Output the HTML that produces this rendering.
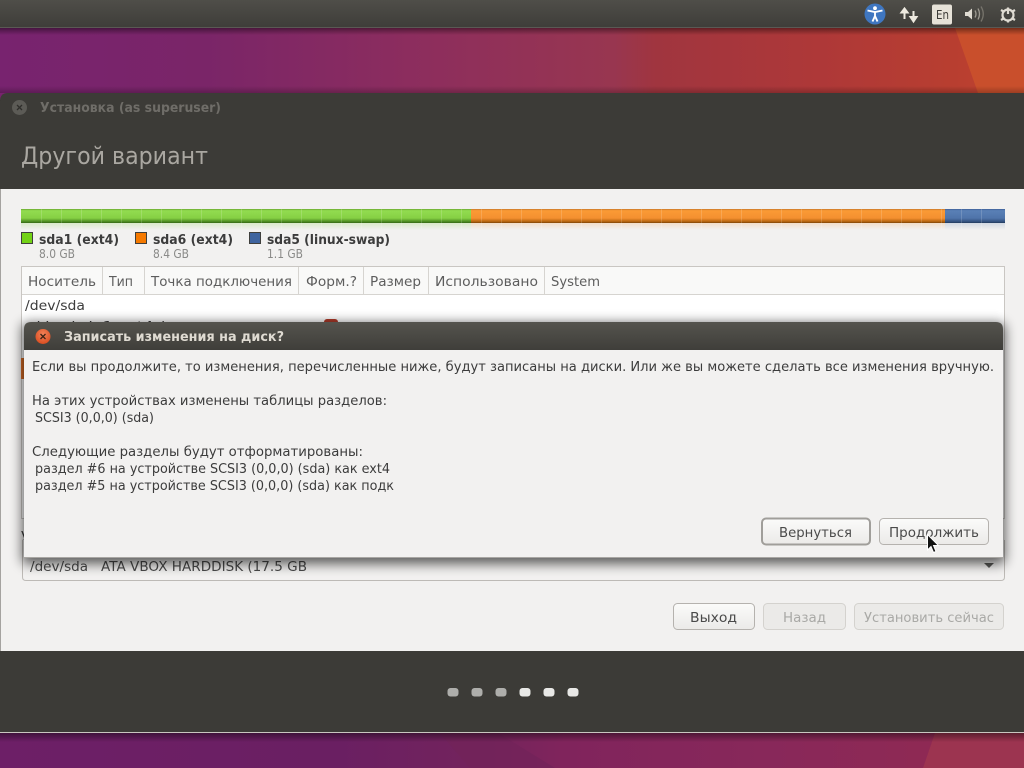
<!DOCTYPE html>
<html lang="ru"><head><meta charset="utf-8"><title>Установка</title>
<style>
html,body{margin:0;padding:0;width:1024px;height:768px;overflow:hidden;background:#000}
svg{display:block}
text{font-family:"DejaVu Sans","Liberation Sans",sans-serif;font-size:13.5px;fill:#3c3c3c}
.h{fill:#5d5d5d;font-size:13.5px}
.b{font-weight:bold;font-size:13px;fill:#3c3c3c}
.s{fill:#8a8a88;font-size:12px}
.d{fill:#a9a9a6}
</style></head><body>
<svg xmlns="http://www.w3.org/2000/svg" width="1024" height="768" viewBox="0 0 1024 768">
<defs>
<linearGradient id="wt" x1="0" y1="0" x2="1" y2="0">
<stop offset="0" stop-color="#78236f"/><stop offset=".2" stop-color="#7a2568"/><stop offset=".4" stop-color="#8c2d5e"/><stop offset=".6" stop-color="#983650"/><stop offset=".64" stop-color="#a0353f"/><stop offset=".8" stop-color="#ae3838"/><stop offset=".93" stop-color="#b83e30"/><stop offset="1" stop-color="#c04430"/></linearGradient>
<linearGradient id="wb" x1="0" y1="0" x2="1" y2="0">
<stop offset="0" stop-color="#6d1f67"/><stop offset=".33" stop-color="#6a1f62"/><stop offset=".48" stop-color="#74245c"/><stop offset=".55" stop-color="#80245c"/><stop offset=".75" stop-color="#88285a"/><stop offset="1" stop-color="#922a50"/></linearGradient>
<linearGradient id="ds" x1="0" y1="0" x2="0" y2="1"><stop offset="0" stop-color="#000" stop-opacity=".42"/><stop offset="1" stop-color="#000" stop-opacity="0"/></linearGradient>
<linearGradient id="du" x1="0" y1="1" x2="0" y2="0"><stop offset="0" stop-color="#000" stop-opacity=".22"/><stop offset="1" stop-color="#000" stop-opacity="0"/></linearGradient>
<linearGradient id="bar" x1="0" y1="0" x2="0" y2="1"><stop offset="0" stop-color="#4f4e49"/><stop offset="1" stop-color="#3e3d39"/></linearGradient>
<linearGradient id="gr" x1="0" y1="0" x2="0" y2="1"><stop offset="0" stop-color="#6aa82f"/><stop offset=".12" stop-color="#92dc50"/><stop offset=".65" stop-color="#86d044"/><stop offset=".9" stop-color="#4c8a20"/><stop offset="1" stop-color="#356815"/></linearGradient>
<linearGradient id="or" x1="0" y1="0" x2="0" y2="1"><stop offset="0" stop-color="#c8782a"/><stop offset=".12" stop-color="#fb9a35"/><stop offset=".65" stop-color="#f49030"/><stop offset=".9" stop-color="#b5640f"/><stop offset="1" stop-color="#7d4306"/></linearGradient>
<linearGradient id="bl" x1="0" y1="0" x2="0" y2="1"><stop offset="0" stop-color="#3d5f98"/><stop offset=".12" stop-color="#5a80b6"/><stop offset=".65" stop-color="#4f74aa"/><stop offset=".9" stop-color="#34527f"/><stop offset="1" stop-color="#22395c"/></linearGradient>
<linearGradient id="fade" x1="0" y1="0" x2="0" y2="1"><stop offset="0" stop-color="#f2f1f0" stop-opacity=".55"/><stop offset="1" stop-color="#f2f1f0"/></linearGradient>
<linearGradient id="btn" x1="0" y1="0" x2="0" y2="1"><stop offset="0" stop-color="#fbfbfa"/><stop offset="1" stop-color="#ebeae8"/></linearGradient>
<linearGradient id="tt" x1="0" y1="0" x2="0" y2="1"><stop offset="0" stop-color="#55544e"/><stop offset="1" stop-color="#3f3e3a"/></linearGradient>
<radialGradient id="cl" cx=".5" cy=".35" r=".7"><stop offset="0" stop-color="#f4845a"/><stop offset="1" stop-color="#d8491c"/></radialGradient>
<filter id="sh" x="-5%" y="-15%" width="110%" height="130%"><feGaussianBlur stdDeviation="6"/></filter>
</defs>

<!-- wallpaper -->
<rect y="0" width="1024" height="100" fill="url(#wt)"/>
<polygon points="955,28 1024,28 1024,93 978,93" fill="#c94f2c"/>
<rect y="725" width="1024" height="43" fill="url(#wb)"/>
<polygon points="498,733 555,768 470,768 440,733" fill="#72245a" opacity=".7"/>
<polygon points="935,733 1024,733 1024,768 923,768" fill="#9c3450"/>
<rect y="28" width="1024" height="7" fill="url(#ds)"/>
<rect y="86" width="1024" height="7" fill="url(#du)"/>
<rect y="733" width="1024" height="9" fill="url(#ds)"/>

<!-- top panel -->
<rect width="1024" height="28" fill="url(#bar)"/>
<rect y="27" width="1024" height="1" fill="#5a5954"/>
<circle cx="875" cy="14" r="10.500" fill="#3f76c0"/>
<circle cx="875" cy="8.200" r="1.900" fill="#fff"/>
<path d="M867.500 10.500 L875 12 L882.500 10.500 M875 12 V16 M875 16 L872.500 21.500 M875 16 L877.500 21.500" stroke="#fff" stroke-width="1.900" fill="none"/>
<path d="M904.500 9 V19 M901.500 12.500 L904.500 8.500 L907.500 12.500Z M913.500 11 V20 M910.500 17 L913.500 21.500 L916.500 17Z" stroke="#eeeae0" stroke-width="2" fill="#eeeae0"/>
<rect x="932" y="4.500" width="20" height="20" rx="2" fill="#e6e2d8"/>
<text x="936" y="19" textLength="13" lengthAdjust="spacingAndGlyphs" style="font-size:12.500px;fill:#3c3b37">En</text>
<path d="M965 12 H968 L972 8.500 V19.500 L968 16 H965Z" fill="#dfdbd2"/>
<path d="M975 10.500 Q977 14 975 17.500 M978 8.500 Q981 14 978 19.500" stroke="#9d9a92" stroke-width="1.300" fill="none"/>
<path d="M981 6.500 Q985.500 14 981 21.500" stroke="#77746c" stroke-width="1.300" fill="none"/>
<circle cx="1008" cy="15" r="5.500" fill="none" stroke="#dfdbd2" stroke-width="2.200"/>
<path d="M1008 7.500 V14" stroke="#dfdbd2" stroke-width="2.200"/>
<path d="M1001 10 L1003.500 11.500 M1015 10 L1012.500 11.500 M1001 20 L1003.500 18.500 M1015 20 L1012.500 18.500 M1008 22.500 V20.500" stroke="#dfdbd2" stroke-width="2.200"/>

<!-- window -->
<path d="M0 101 Q0 93 8 93 H1024 V733 H0Z" fill="#3c3b37"/>
<rect x="0" y="732" width="1024" height="1" fill="#c9c6c0"/>
<rect x="0" y="189" width="1024" height="462" fill="#f2f1f0"/>
<rect x="0" y="189" width="1" height="462" fill="#a5a3a0"/>
<circle cx="19.500" cy="107.500" r="7.500" fill="#5c5b56"/>
<path d="M17 105 L22 110 M22 105 L17 110" stroke="#2f2e2b" stroke-width="1.300"/>
<text x="40" y="112" textLength="181" lengthAdjust="spacingAndGlyphs" style="font-weight:bold;font-size:13px;fill:#6f6d68">Установка (as superuser)</text>
<text x="21" y="164" textLength="187" lengthAdjust="spacingAndGlyphs" style="font-size:24px;fill:#aaa7a1">Другой вариант</text>

<!-- partition bar -->
<rect x="21" y="209" width="450" height="14" fill="url(#gr)"/>
<rect x="471" y="209" width="474" height="14" fill="url(#or)"/>
<rect x="945" y="209" width="60" height="14" fill="url(#bl)"/>
<g opacity=".55">
<rect x="21" y="223" width="450" height="7" fill="#8fd050"/>
<rect x="471" y="223" width="474" height="7" fill="#f0a050"/>
<rect x="945" y="223" width="60" height="7" fill="#7090b8"/>
</g>
<rect x="21" y="223" width="984" height="7" fill="url(#fade)"/>
<path d="M41.500 209V229M61.500 209V229M81.500 209V229M101.500 209V229M121.500 209V229M141.500 209V229M161.500 209V229M181.500 209V229M201.500 209V229M221.500 209V229M241.500 209V229M261.500 209V229M281.500 209V229M301.500 209V229M321.500 209V229M341.500 209V229M361.500 209V229M381.500 209V229M401.500 209V229M421.500 209V229M441.500 209V229M461.500 209V229M481.500 209V229M501.500 209V229M521.500 209V229M541.500 209V229M561.500 209V229M581.500 209V229M601.500 209V229M621.500 209V229M641.500 209V229M661.500 209V229M681.500 209V229M701.500 209V229M721.500 209V229M741.500 209V229M761.500 209V229M781.500 209V229M801.500 209V229M821.500 209V229M841.500 209V229M861.500 209V229M881.500 209V229M901.500 209V229M921.500 209V229M941.500 209V229M961.500 209V229M981.500 209V229" stroke="#fff" stroke-opacity=".16" stroke-width="1"/>

<!-- legend -->
<rect x="21.500" y="232.500" width="11" height="11" fill="#73d216" stroke="#3f3f3c"/>
<text class="b" x="39" y="244" textLength="80" lengthAdjust="spacingAndGlyphs">sda1 (ext4)</text>
<text class="s" x="39" y="258" textLength="36" lengthAdjust="spacingAndGlyphs">8.0 GB</text>
<rect x="135.500" y="232.500" width="11" height="11" fill="#f57900" stroke="#3f3f3c"/>
<text class="b" x="153" y="244" textLength="80" lengthAdjust="spacingAndGlyphs">sda6 (ext4)</text>
<text class="s" x="153" y="258" textLength="36" lengthAdjust="spacingAndGlyphs">8.4 GB</text>
<rect x="249.500" y="232.500" width="11" height="11" fill="#3f649f" stroke="#3f3f3c"/>
<text class="b" x="267" y="244" textLength="123" lengthAdjust="spacingAndGlyphs">sda5 (linux-swap)</text>
<text class="s" x="267" y="258" textLength="36" lengthAdjust="spacingAndGlyphs">1.1 GB</text>

<!-- table -->
<rect x="21.500" y="266.500" width="983" height="252" fill="#fff" stroke="#c9c6c2"/>
<rect x="22" y="267" width="982" height="27" fill="#f9f9f8"/>
<rect x="22" y="294" width="982" height="1" fill="#d6d4d0"/>
<path d="M102.500 267V294M144.500 267V294M298.500 267V294M363.500 267V294M428.500 267V294M544.500 267V294" stroke="#d6d4d0"/>
<text class="h" x="28" y="286" textLength="68" lengthAdjust="spacingAndGlyphs">Носитель</text>
<text class="h" x="109" y="286" textLength="24" lengthAdjust="spacingAndGlyphs">Тип</text>
<text class="h" x="151" y="286" textLength="141" lengthAdjust="spacingAndGlyphs">Точка подключения</text>
<text class="h" x="306" y="286" textLength="51" lengthAdjust="spacingAndGlyphs">Форм.?</text>
<text class="h" x="370" y="286" textLength="51" lengthAdjust="spacingAndGlyphs">Размер</text>
<text class="h" x="435" y="286" textLength="103" lengthAdjust="spacingAndGlyphs">Использовано</text>
<text class="h" x="551" y="286" textLength="49" lengthAdjust="spacingAndGlyphs">System</text>
<text x="25" y="310" textLength="60" lengthAdjust="spacingAndGlyphs">/dev/sda</text>
<text x="34" y="331" textLength="130" lengthAdjust="spacingAndGlyphs">/dev/sda1 ext4 /</text>
<rect x="324" y="319" width="14" height="12" rx="3" fill="#b03a2a"/>
<rect x="21" y="358" width="4" height="21" fill="#d86c25"/>

<!-- lower area under dialog -->
<rect x="0" y="519" width="24" height="34" fill="#f2f1f0"/>
<rect x="0" y="189" width="1" height="462" fill="#a5a3a0"/>
<text x="21" y="541" style="font-size:13px">У</text>
<path d="M22.500 540 V577 Q22.500 580.500 26 580.500 H1001 Q1004.500 580.500 1004.500 577 V540" fill="#f2f1f0" stroke="#bdbab6"/>
<text x="30" y="571" textLength="277" lengthAdjust="spacingAndGlyphs" xml:space="preserve" style="fill:#4a4a4a">/dev/sda   ATA VBOX HARDDISK (17.5 GB</text>
<path d="M984 563 H994 L989 568Z" fill="#5a5a58"/>

<!-- bottom buttons -->
<rect x="673.500" y="603.500" width="81" height="26" rx="4" fill="url(#btn)" stroke="#b5b2ae"/>
<text x="690" y="622" textLength="47" lengthAdjust="spacingAndGlyphs" style="fill:#4a4a4a">Выход</text>
<rect x="763.500" y="603.500" width="82" height="26" rx="4" fill="#ebeae8" stroke="#d4d2ce"/>
<text class="d" x="783" y="622" textLength="43" lengthAdjust="spacingAndGlyphs">Назад</text>
<rect x="854.500" y="603.500" width="149" height="26" rx="4" fill="#ebeae8" stroke="#d4d2ce"/>
<text class="d" x="864" y="622" textLength="130" lengthAdjust="spacingAndGlyphs">Установить сейчас</text>

<!-- dots -->
<rect x="447.500" y="688" width="11" height="8.500" rx="3" fill="#aeaeab"/>
<rect x="471.500" y="688" width="11" height="8.500" rx="3" fill="#aeaeab"/>
<rect x="495.500" y="688" width="11" height="8.500" rx="3" fill="#aeaeab"/>
<rect x="519.500" y="688" width="11" height="8.500" rx="3" fill="#e8e8e6"/>
<rect x="543.500" y="688" width="11" height="8.500" rx="3" fill="#e8e8e6"/>
<rect x="567.500" y="688" width="11" height="8.500" rx="3" fill="#e8e8e6"/>

<!-- dialog -->
<rect x="22" y="323" width="983" height="241" rx="5" fill="#000" opacity=".62" filter="url(#sh)"/>
<path d="M24 558 V329 Q24 322 31 322 H996 Q1003 322 1003 329 V558Z" fill="#f2f1f0"/>
<path d="M24 350 V329 Q24 322 31 322 H996 Q1003 322 1003 329 V350Z" fill="url(#tt)"/>
<rect x="24" y="557" width="979" height="1" fill="#a9a7a3"/>
<circle cx="43" cy="336.500" r="7.500" fill="url(#cl)"/>
<path d="M40.500 334 L45.500 339 M45.500 334 L40.500 339" stroke="#3f2416" stroke-width="1.300"/>
<text x="64" y="341" textLength="220" lengthAdjust="spacingAndGlyphs" style="font-weight:bold;font-size:13px;fill:#dfdbd2">Записать изменения на диск?</text>
<text x="32" y="371" textLength="962" lengthAdjust="spacingAndGlyphs">Если вы продолжите, то изменения, перечисленные ниже, будут записаны на диски. Или же вы можете сделать все изменения вручную.</text>
<text x="32" y="405" textLength="355" lengthAdjust="spacingAndGlyphs">На этих устройствах изменены таблицы разделов:</text>
<text x="35" y="422" textLength="119" lengthAdjust="spacingAndGlyphs">SCSI3 (0,0,0) (sda)</text>
<text x="32" y="456" textLength="331" lengthAdjust="spacingAndGlyphs">Следующие разделы будут отформатированы:</text>
<text x="35" y="473" textLength="355" lengthAdjust="spacingAndGlyphs">раздел #6 на устройстве SCSI3 (0,0,0) (sda) как ext4</text>
<text x="35" y="490" textLength="359" lengthAdjust="spacingAndGlyphs">раздел #5 на устройстве SCSI3 (0,0,0) (sda) как подк</text>
<rect x="762" y="518.500" width="108" height="26" rx="4" fill="url(#btn)" stroke="#a09e9a" stroke-width="2"/>
<text x="779" y="537" textLength="73" lengthAdjust="spacingAndGlyphs" style="fill:#4a4a4a">Вернуться</text>
<rect x="879.500" y="518.500" width="109" height="26" rx="4" fill="url(#btn)" stroke="#b5b2ae"/>
<text x="889" y="537" textLength="90" lengthAdjust="spacingAndGlyphs" style="fill:#4a4a4a">Продолжить</text>

<!-- cursor -->
<path d="M927.500 534.500 V550 L931 546.500 L933.500 552.500 L936 551.500 L933.500 545.500 L938.500 545.500Z" fill="#111" stroke="#fff" stroke-width="1"/>
</svg>
</body></html>
